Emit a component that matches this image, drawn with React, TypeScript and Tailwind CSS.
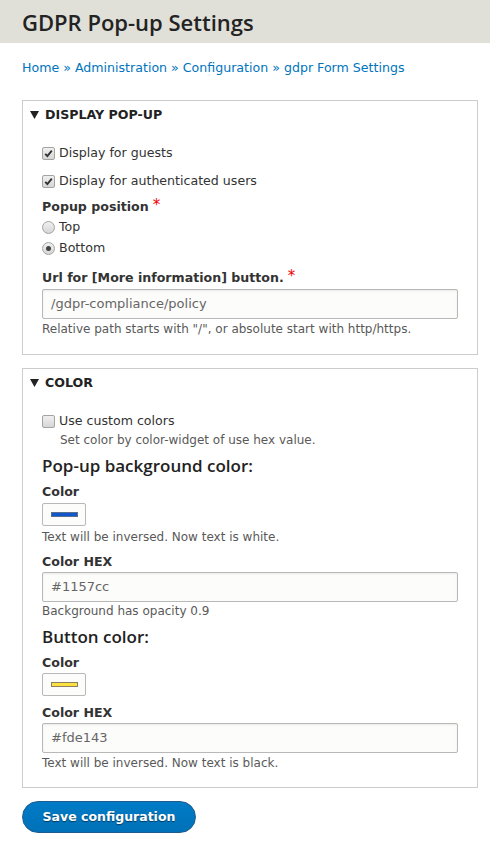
import React from "react";

const font = { fontFamily: '"DejaVu Sans", "Liberation Sans", sans-serif' };
const headFont = { fontFamily: '"Open Sans", "DejaVu Sans", sans-serif' };

function Checkbox({ checked }: { checked?: boolean }) {
  return (
    <span className="inline-flex h-[13px] w-[13px] shrink-0 items-center justify-center rounded-[2px] border border-[#a3a3a3] bg-gradient-to-b from-[#f0f0f0] to-[#d6d6d6]">
      {checked && (
        <svg width="9" height="9" viewBox="0 0 9 9">
          <path d="M1.2 4.8 L3.4 7 L7.8 1.6" fill="none" stroke="#333" strokeWidth="1.9" />
        </svg>
      )}
    </span>
  );
}

function Radio({ checked }: { checked?: boolean }) {
  return (
    <span className="inline-flex h-[13px] w-[13px] shrink-0 items-center justify-center rounded-full border border-[#a3a3a3] bg-gradient-to-b from-[#f0f0f0] to-[#d6d6d6]">
      {checked && <span className="h-[5px] w-[5px] rounded-full bg-[#444]" />}
    </span>
  );
}

function Star() {
  return <span className="ml-[4px] align-top text-[15px] font-normal leading-none text-[#e00]">*</span>;
}

function TextInput({ value }: { value: string }) {
  return (
    <div className="flex h-[30px] w-[416px] items-center rounded-[2px] border border-[#b8b8b8] bg-[#fcfcfa] px-[8px] text-[13px] text-[#666] shadow-[inset_0_1px_2px_rgba(0,0,0,0.08)]">
      {value}
    </div>
  );
}

function Swatch({ color, stroke }: { color: string; stroke: string }) {
  return (
    <div className="flex h-[23px] w-[44px] items-center justify-center rounded-[2px] border border-[#b8b8b8] bg-[#fcfcfa]">
      <span className="block h-[5px] w-[27px] border" style={{ backgroundColor: color, borderColor: stroke }} />
    </div>
  );
}

function Legend({ children }: { children: React.ReactNode }) {
  return (
    <div className="flex h-[18px] items-center pl-[7px] text-[12.6px] font-bold uppercase leading-[18px] text-[#222]">
      <svg width="9" height="8" viewBox="0 0 9 8" className="mr-[6px]">
        <path d="M0 0 L9 0 L4.5 8 Z" fill="#222" />
      </svg>
      {children}
    </div>
  );
}

export default function App() {
  return (
    <div className="min-h-[860px] w-[490px] bg-white text-[12.6px] text-[#333]" style={font}>
      <div className="flex h-[43px] items-center bg-[#e0e0d8] pl-[22px]">
        <h1 className="text-[22px] font-semibold leading-none text-[#232323]" style={headFont}>
          GDPR Pop-up Settings
        </h1>
      </div>

      <div className="ml-[22px] mt-[16px] h-[18px] leading-[18px] text-[#0074bd]">
        <span>Home</span> » <span>Administration</span> » <span>Configuration</span> » <span>gdpr Form Settings</span>
      </div>

      <div className="ml-[22px] mt-[23px] w-[456px] border border-[#ccc] pb-[17px] pt-[5px]">
        <Legend>Display pop-up</Legend>
        <div className="pl-[19px]">
          <label className="mt-[20px] flex h-[18px] items-center gap-[4px] leading-[18px]">
            <Checkbox checked />
            <span>Display for guests</span>
          </label>
          <label className="mt-[10px] flex h-[18px] items-center gap-[4px] leading-[18px]">
            <Checkbox checked />
            <span>Display for authenticated users</span>
          </label>
          <div className="mt-[8px] h-[18px] font-bold leading-[18px]">
            Popup position
            <Star />
          </div>
          <label className="mt-[2px] flex h-[18px] items-center gap-[4px] leading-[18px]">
            <Radio />
            <span>Top</span>
          </label>
          <label className="mt-[3px] flex h-[18px] items-center gap-[4px] leading-[18px]">
            <Radio checked />
            <span>Bottom</span>
          </label>
          <div className="mt-[12px] h-[18px] font-bold leading-[18px]">
            Url for [More information] button.
            <Star />
          </div>
          <div className="mt-[2px]">
            <TextInput value="/gdpr-compliance/policy" />
          </div>
          <div className="mt-[2px] h-[16px] text-[12px] leading-[16px] text-[#595959]">
            Relative path starts with "/", or absolute start with http/https.
          </div>
        </div>
      </div>

      <div className="ml-[22px] mt-[13px] w-[456px] border border-[#ccc] pb-[16px] pt-[5px]">
        <Legend>Color</Legend>
        <div className="pl-[19px]">
          <label className="mt-[20px] flex h-[18px] items-center gap-[4px] leading-[18px]">
            <Checkbox />
            <span>Use custom colors</span>
          </label>
          <div className="mt-[2px] h-[16px] pl-[18px] text-[12px] leading-[16px] text-[#595959]">
            Set color by color-widget of use hex value.
          </div>
          <h3 className="mt-[8px] h-[20px] text-[17px] font-semibold leading-[20px] text-[#222]" style={headFont}>
            Pop-up background color:
          </h3>
          <div className="mt-[7px] h-[18px] font-bold leading-[18px]">Color</div>
          <div className="mt-[2px]">
            <Swatch color="#1157cc" stroke="#5a6f8f" />
          </div>
          <div className="mt-[3px] h-[16px] text-[12px] leading-[16px] text-[#595959]">Text will be inversed. Now text is white.</div>
          <div className="mt-[8px] h-[18px] font-bold leading-[18px]">Color HEX</div>
          <div className="mt-[1px]">
            <TextInput value="#1157cc" />
          </div>
          <div className="mt-[1px] h-[16px] text-[12px] leading-[16px] text-[#595959]">Background has opacity 0.9</div>
          <h3 className="mt-[8px] h-[20px] text-[17px] font-semibold leading-[20px] text-[#222]" style={headFont}>
            Button color:
          </h3>
          <div className="mt-[7px] h-[18px] font-bold leading-[18px]">Color</div>
          <div className="mt-[1px]">
            <Swatch color="#fde143" stroke="#8a8060" />
          </div>
          <div className="mt-[8px] h-[18px] font-bold leading-[18px]">Color HEX</div>
          <div className="mt-[1px]">
            <TextInput value="#fde143" />
          </div>
          <div className="mt-[2px] h-[16px] text-[12px] leading-[16px] text-[#595959]">Text will be inversed. Now text is black.</div>
        </div>
      </div>

      <button
        type="button"
        className="ml-[22px] mt-[13px] flex h-[32px] w-[174px] items-center justify-center rounded-full border border-[#1e5c90] bg-gradient-to-b from-[#007bc6] to-[#0071b8] text-[12.5px] font-bold text-white [text-shadow:0_1px_1px_rgba(0,0,0,0.5)]"
      >
        Save configuration
      </button>
    </div>
  );
}
